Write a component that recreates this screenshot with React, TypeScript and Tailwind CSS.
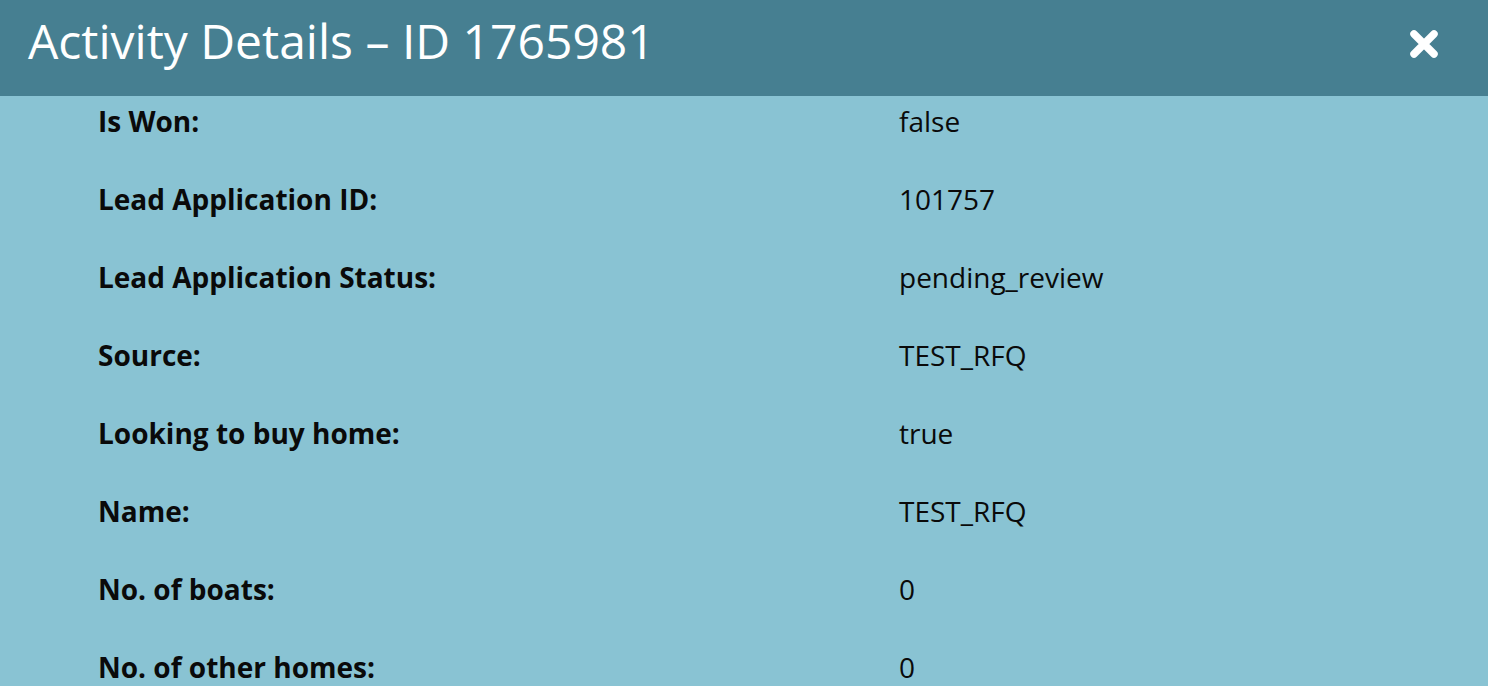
const rows: [string, string][] = [
  ["Is Won:", "false"],
  ["Lead Application ID:", "101757"],
  ["Lead Application Status:", "pending_review"],
  ["Source:", "TEST_RFQ"],
  ["Looking to buy home:", "true"],
  ["Name:", "TEST_RFQ"],
  ["No. of boats:", "0"],
  ["No. of other homes:", "0"],
];

function CloseIcon() {
  return (
    <svg width="30" height="30" viewBox="0 0 30 30" className="mb-[9px]">
      <path d="M5 5 L25 25 M25 5 L5 25" stroke="white" strokeWidth="7.5" strokeLinecap="round" />
    </svg>
  );
}

export default function App() {
  return (
    <div className="w-[1488px] h-[686px] overflow-hidden bg-[#89c3d3] font-['Open_Sans',sans-serif]">
      <div className="h-[96px] bg-[#467f91] flex items-center justify-between pl-[28px] pr-[49px]">
        <h1 className="text-white text-[48px] leading-none font-normal pb-[14px]">Activity Details – ID 1765981</h1>
        <CloseIcon />
      </div>
      <div className="pt-[7px] pl-[98px]">
        {rows.map(([label, value]) => (
          <div key={label} className="flex h-[78px] text-[28px] leading-[36px] text-[#0a0a0a]">
            <div className="w-[801px] font-bold">{label}</div>
            <div>{value}</div>
          </div>
        ))}
      </div>
    </div>
  );
}
